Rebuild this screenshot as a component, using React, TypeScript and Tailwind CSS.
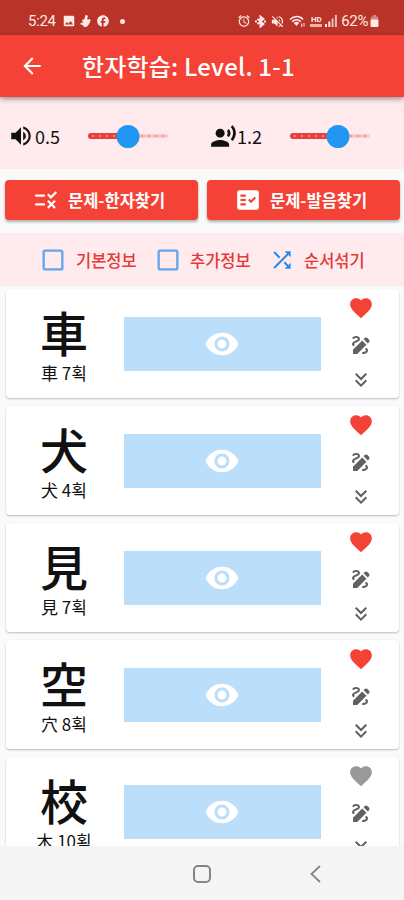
import {
  MdAlarm,
  MdArrowBack,
  MdCheckBoxOutlineBlank,
  MdDraw,
  MdFacebook,
  MdFactCheck,
  MdFavorite,
  MdImage,
  MdKeyboardDoubleArrowDown,
  MdRecordVoiceOver,
  MdRule,
  MdShuffle,
  MdVisibility,
  MdVolumeOff,
  MdVolumeUp,
} from "react-icons/md"

interface Hanja {
  char: string
  radical: string
  strokes: number
  liked: boolean
}

const words: Hanja[] = [
  { char: "車", radical: "車", strokes: 7, liked: true },
  { char: "犬", radical: "犬", strokes: 4, liked: true },
  { char: "見", radical: "見", strokes: 7, liked: true },
  { char: "空", radical: "穴", strokes: 8, liked: true },
  { char: "校", radical: "木", strokes: 10, liked: false },
]

function StatusBar() {
  return (
    <div className="flex h-[35px] shrink-0 items-center bg-[#b93329] pt-[7px] pr-[25px] pl-7 text-[#ffe9e6]">
      <span className="w-[34px] font-[Roboto] text-[15px] leading-5 tracking-[-0.3px]">5:24</span>
      <MdImage size={14} />
      <svg width="12" height="12" viewBox="0 0 12 12" className="ml-1" fill="currentColor">
        <path d="M6 0c1.800 0 2.400 1.600 1.400 3l-.6 1.200h2.700c1.500.2 1.500 1.900.3 2.100.6.900.2 1.700-.6 1.900.2.900-.2 1.500-1 1.600C7.700 11.300 6.700 12 5.500 12c-1.600 0-2.500-.9-2.700-2.100L1 9.700C.1 9.200.4 8 1.300 7.800l1.900-.4L2.300 6c-.4-.9.4-1.700 1.300-1.400l1-.8C5 2.700 4.800.4 6 0z" />
      </svg>
      <MdFacebook size={14} className="ml-1" />
      <span className="ml-2.5 size-[5px] rounded-full bg-current" />

      <div className="ml-auto flex items-center">
        <MdAlarm size={14} />
        <svg width="11" height="13" viewBox="0 0 11 13" className="ml-1" fill="none" stroke="currentColor" strokeWidth="1.9">
          <path d="M2.500 4l6 5-3 2.500v-10l3 2.500-6 5M1 5.500v2M10 5.500v2" />
        </svg>
        <MdVolumeOff size={15} className="ml-1" />
        <svg width="17" height="13" viewBox="0 0 17 13" className="ml-1" fill="none" stroke="currentColor" strokeWidth="1.6">
          <path d="M1 4.500c4-4 10-4 13 0M3.200 6.700c2.500-2.600 6.200-2.600 8.600 0" />
          <path d="M4.800 8c1.500-1.600 4-1.600 5.400 0L7.500 11z" fill="currentColor" stroke="none" />
          <path d="M12.700 12V8.500M15 8v3.500" strokeWidth="1" />
        </svg>
        <div className="ml-1 flex flex-col items-center">
          <span className="h-[7px] font-[Roboto] text-[8px] leading-[7px] font-bold">HD</span>
          <span className="mt-px h-[3px] w-3 bg-current opacity-70" />
        </div>
        <svg width="12" height="12" viewBox="0 0 12 12" className="ml-[3px]" fill="currentColor">
          <path d="M0 9h2v3H0zM3.300 6.500h2V12h-2z" />
          <path d="M6.600 3.500h2V12h-2zM9.900 0h2v12h-2z" opacity=".75" />
        </svg>
        <span className="ml-1 font-[Roboto] text-[15px] leading-5 tracking-[-0.4px]">62%</span>
        <svg width="9" height="12" viewBox="0 0 9 12" className="ml-0.5" fill="currentColor">
          <path d="M3 0h3v1.500h2V5H1V1.500h2z" opacity=".45" />
          <path d="M.5 4.500h8V11a1 1 0 0 1-1 1h-6a1 1 0 0 1-1-1z" />
        </svg>
      </div>
    </div>
  )
}

// value is the thumb's place on the track, 0 to 100
function Slider({ value }: { value: number }) {
  return (
    <div className="relative flex h-6 w-20 items-center">
      <div className="h-1 w-full rounded-full bg-[#f9c9c9]" />
      <div className="absolute left-0 h-1.5 rounded-full bg-[#e8403a]" style={{ width: `${value}%` }} />
      <div className="absolute inset-x-1 flex justify-between">
        {Array.from({ length: 11 }, (_, i) => (
          <span
            key={i}
            className={i * 10 < value ? "size-0.5 rounded-full bg-[#f59a96]" : "size-0.5 rounded-full bg-[#e88e90]"}
          />
        ))}
      </div>
      <div
        className="absolute size-[23px] -translate-x-1/2 rounded-full bg-[#2196f3]"
        style={{ left: `${value}%` }}
      />
    </div>
  )
}

function HanjaCard({ word }: { word: Hanja }) {
  return (
    <div className="flex h-[109px] shrink-0 rounded bg-white shadow-[0_1px_2px_rgba(0,0,0,0.25)]">
      <div className="flex w-[118px] flex-col items-center pt-[15px] pr-0.5 text-[#111]">
        <span className="h-[54px] font-['Noto_Sans_CJK_JP','Noto_Sans_CJK_KR',sans-serif] text-[48px] leading-[54px] font-medium">
          {word.char}
        </span>
        <span className="mt-[3px] h-6 text-[17px] leading-6 whitespace-nowrap">
          {`${word.radical} ${word.strokes}획`}
        </span>
      </div>
      <div className="mt-7 flex h-[54px] w-[197px] items-center justify-center bg-[#bbdefb] pr-px text-white">
        <MdVisibility size={36} />
      </div>
      <div className="ml-7 flex w-6 flex-col items-center text-[#616161]">
        <MdFavorite size={26} className={word.liked ? "mt-1.5 text-[#f44336]" : "mt-1.5 text-[#999]"} />
        <MdDraw size={24} className="mt-3" />
        <MdKeyboardDoubleArrowDown size={24} className="mt-[11px]" />
      </div>
    </div>
  )
}

export default function App() {
  return (
    <div className="flex h-[900px] w-[404px] flex-col overflow-hidden bg-[#fafafa] font-['Noto_Sans_CJK_KR','Noto_Sans',sans-serif]">
      <StatusBar />

      {/* App bar */}
      <div className="z-10 flex h-[62px] shrink-0 items-center bg-[#f44336] pl-[19px] text-white shadow-[0_2px_5px_rgba(0,0,0,0.4)]">
        <MdArrowBack size={26} />
        <h1 className="ml-[37px] text-[24px] leading-8 font-medium tracking-[0.2px] whitespace-nowrap">
          한자학습: Level. 1-1
        </h1>
      </div>

      {/* Volume and speech rate */}
      <div className="flex h-[72px] shrink-0 items-center bg-[#ffebee] pt-1.5 text-[#111]">
        <div className="flex w-[202px] items-center pl-2">
          <MdVolumeUp size={26} />
          <span className="w-[54px] pl-px text-[18px] leading-6">0.5</span>
          <Slider value={50} />
        </div>
        <div className="flex w-[202px] items-center pl-2">
          <MdRecordVoiceOver size={27} />
          <span className="w-[53px] text-[18px] leading-6">1.2</span>
          <Slider value={60} />
        </div>
      </div>

      {/* Quiz buttons */}
      <div className="flex shrink-0 gap-[9px] pt-[11px] pr-1 pb-[13px] pl-[5px] text-[16.5px] leading-6 font-bold text-white">
        <button className="flex h-10 flex-1 items-center rounded bg-[#f44336] pl-7 whitespace-nowrap shadow-[0_2px_3px_rgba(0,0,0,0.3)]">
          <MdRule size={26} />
          <span className="ml-[9px]">문제-한자찾기</span>
        </button>
        <button className="flex h-10 flex-1 items-center rounded bg-[#f44336] pl-7 whitespace-nowrap shadow-[0_2px_3px_rgba(0,0,0,0.3)]">
          <MdFactCheck size={26} />
          <span className="ml-[9px]">문제-발음찾기</span>
        </button>
      </div>

      {/* Display options */}
      <div className="flex h-[53px] shrink-0 items-center bg-[#ffebee] pl-[39px] text-[16.5px] leading-6 font-medium text-[#e53935]">
        <MdCheckBoxOutlineBlank size={28} className="text-[#64a5ea]" />
        <span className="ml-[9px] w-[78px] whitespace-nowrap">기본정보</span>
        <MdCheckBoxOutlineBlank size={28} className="text-[#64a5ea]" />
        <span className="ml-2 w-[79px] whitespace-nowrap">추가정보</span>
        <MdShuffle size={26} className="text-[#2b8ceb]" />
        <span className="ml-[9px] whitespace-nowrap">순서섞기</span>
      </div>

      {/* Word list */}
      <div className="flex min-h-0 flex-1 flex-col gap-2 overflow-hidden pt-[3px] pr-[5px] pl-1.5">
        {words.map((word) => (
          <HanjaCard key={word.char} word={word} />
        ))}
      </div>

      {/* Navigation bar */}
      <div className="flex h-[54px] shrink-0 items-center bg-[#f5f5f5] pt-px text-[#858585]">
        <div className="ml-[193px] size-[18px] rounded-[5px] border-2 border-current" />
        <svg width="11" height="18" viewBox="0 0 11 18" className="ml-[99px]" fill="none" stroke="currentColor" strokeWidth="1.8">
          <path d="M10 1L1.500 9l8.500 8" />
        </svg>
      </div>
    </div>
  )
}
